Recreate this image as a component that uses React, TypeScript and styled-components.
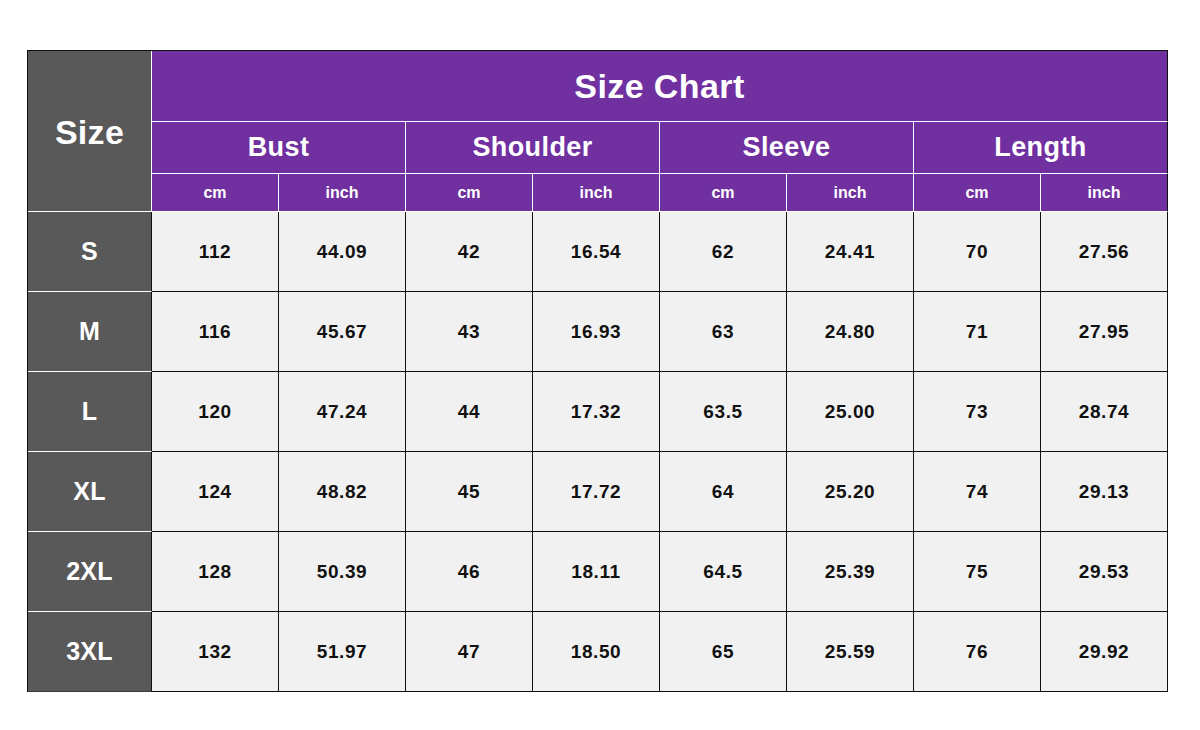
import styled, { createGlobalStyle } from "styled-components";

const GlobalStyle = createGlobalStyle`
body {
    margin: 0;
    background: #ffffff;
    font-family: "Liberation Sans", Arial, sans-serif;
}
`

const Page = styled.div`
padding: 50px 0 0 27px;
`

const StyledTable = styled.div`
display: grid;
grid-template-columns: 124px repeat(8, 127px);
grid-template-rows: 71px 52px 38px repeat(6, 80px);
width: max-content;
border-top: 1px solid #111;
border-left: 1px solid #111;
`

const Cell = styled.div<{ $kind: "size" | "head" | "data", $last?: boolean }>`
box-sizing: border-box;
display: flex;
align-items: center;
justify-content: center;
font-weight: bold;
border-right: 1px solid ${p => p.$kind === "data" || p.$last ? "#111" : "#ffffff"};
border-bottom: 1px solid ${p => p.$kind === "data" ? "#111" : "#ffffff"};
background: ${p => p.$kind === "size" ? "#595959" : p.$kind === "head" ? "#7030a0" : "#f1f1f1"};
color: ${p => p.$kind === "data" ? "#111" : "#ffffff"};
`

const SizeCorner = styled(Cell)`
grid-row: 1 / span 3;
font-size: 34px;
letter-spacing: 0.3px;
padding-top: 2px;
`

const Title = styled(Cell)`
grid-column: 2 / span 8;
font-size: 34px;
letter-spacing: 0.4px;
`

const Group = styled(Cell)`
grid-column: span 2;
font-size: 27px;
letter-spacing: 0.4px;
`

const Unit = styled(Cell)`
font-size: 16px;
padding-top: 1px;
`

const RowLabel = styled(Cell)`
font-size: 25px;
letter-spacing: 0.3px;
border-right-color: #111;
border-bottom-color: ${p => p.$last ? "#3a3a3a" : "#ffffff"};
`

const Value = styled(Cell)`
font-size: 19px;
letter-spacing: 0.6px;
`

const groups = ["Bust", "Shoulder", "Sleeve", "Length"];

const rows = [
    { size: "S", values: ["112", "44.09", "42", "16.54", "62", "24.41", "70", "27.56"] },
    { size: "M", values: ["116", "45.67", "43", "16.93", "63", "24.80", "71", "27.95"] },
    { size: "L", values: ["120", "47.24", "44", "17.32", "63.5", "25.00", "73", "28.74"] },
    { size: "XL", values: ["124", "48.82", "45", "17.72", "64", "25.20", "74", "29.13"] },
    { size: "2XL", values: ["128", "50.39", "46", "18.11", "64.5", "25.39", "75", "29.53"] },
    { size: "3XL", values: ["132", "51.97", "47", "18.50", "65", "25.59", "76", "29.92"] },
];

const App = () => {
    return (
        <Page>
            <GlobalStyle/>
            <StyledTable>
                <SizeCorner $kind="size">Size</SizeCorner>
                <Title $kind="head" $last>Size Chart</Title>
                {groups.map((g, i) => <Group key={g} $kind="head" $last={i === groups.length - 1}>{g}</Group>)}
                {groups.map((g, i) => [
                    <Unit key={g + "cm"} $kind="head">cm</Unit>,
                    <Unit key={g + "in"} $kind="head" $last={i === groups.length - 1}>inch</Unit>,
                ])}
                {rows.map((r, ri) => [
                    <RowLabel key={r.size} $kind="size" $last={ri === rows.length - 1}>{r.size}</RowLabel>,
                    ...r.values.map((v, i) => <Value key={r.size + i} $kind="data">{v}</Value>),
                ])}
            </StyledTable>
        </Page>
    );
}

export default App;
